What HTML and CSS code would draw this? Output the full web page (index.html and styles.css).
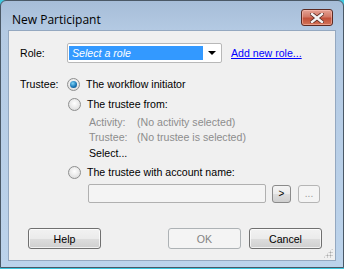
FILE: index.html
```html
<!DOCTYPE html>
<html lang="en">
<head>
<meta charset="UTF-8" />
<title>New Participant</title>
<link rel="stylesheet" href="styles.css">
</head>
<body>
  <div class="window">
    <!-- Title bar -->
    <div class="titlebar">
      <span class="title">New Participant</span>
      <button class="close" aria-label="Close">
        <svg width="14" height="10" viewBox="0 0 14 10">
          <path d="M2 1 L12 9 M12 1 L2 9" stroke="#5a2a22" stroke-width="4" stroke-linecap="square"/>
          <path d="M2 1 L12 9 M12 1 L2 9" stroke="#f4f4f4" stroke-width="2.4" stroke-linecap="square"/>
        </svg>
      </button>
    </div>

    <!-- Client area -->
    <div class="client">
      <div class="row role-row">
        <span class="label">Role:</span>
        <div class="combo">
          <span class="combo-value">Select a role</span>
          <span class="combo-arrow"></span>
        </div>
        <a href="#" class="link">Add new role...</a>
      </div>

      <div class="row trustee-row">
        <span class="label">Trustee:</span>
        <label class="radio checked"><span class="dot"></span>The workflow initiator</label>
      </div>

      <div class="row sub">
        <label class="radio"><span class="dot"></span>The trustee from:</label>
      </div>

      <div class="details">
        <div class="detail"><span class="dkey">Activity:</span>(No activity selected)</div>
        <div class="detail"><span class="dkey">Trustee:</span>(No trustee is selected)</div>
        <div class="detail select">Select...</div>
      </div>

      <div class="row sub account">
        <label class="radio"><span class="dot"></span>The trustee with account name:</label>
      </div>

      <div class="account-input">
        <div class="textbox"></div>
        <button class="small">&gt;</button>
        <button class="small disabled">...</button>
      </div>

      <div class="buttons">
        <button class="btn">Help</button>
        <div class="spacer"></div>
        <button class="btn disabled">OK</button>
        <button class="btn">Cancel</button>
      </div>

      <div class="grip"></div>
    </div>
  </div>
</body>
</html>
```

FILE: styles.css
```css
* {
  margin: 0;
  padding: 0;
  box-sizing: border-box;
}

html, body {
  width: 344px;
  height: 269px;
  overflow: hidden;
  background: #3fc8e0;
  font-family: 'Liberation Sans', Arial, sans-serif;
  font-size: 10.6px;
  color: #000;
}

.window {
  width: 344px;
  height: 268px;
  border: 1px solid #4a5866;
  border-radius: 6px 6px 0 0;
  background: linear-gradient(to bottom, #a6bdd8 0px, #b4cae3 30px, #bcd3eb 100%);
  display: flex;
  flex-direction: column;
}

.titlebar {
  height: 29px;
  display: flex;
  align-items: flex-start;
  padding: 8px 10px 0 11px;
}

.title {
  font-family: 'Open Sans', 'Liberation Sans', sans-serif;
  font-size: 12px;
  line-height: 14px;
  margin-top: 4px;
  color: #000;
  flex: 1;
}

.close {
  width: 32px;
  height: 17px;
  border: 1px solid #5c2a22;
  border-radius: 3px;
  background: linear-gradient(to bottom, #e4a294 0%, #d27866 45%, #c2503a 55%, #d27458 100%);
  display: flex;
  align-items: center;
  justify-content: center;
  box-shadow: inset 0 0 0 1px rgba(255, 200, 190, 0.5);
}

.client {
  position: relative;
  flex: 1;
  margin: 0 7px 6px 7px;
  background: #f0f0f0;
  border: 1px solid #94a8c0;
  padding: 11px 0 0 11px;
}

.row {
  display: flex;
  align-items: center;
}

.label {
  width: 47px;
}

.role-row {
  height: 21px;
}

.combo {
  width: 155px;
  height: 20px;
  border: 1px solid #b8b8b8;
  border-radius: 2px;
  background: #fff;
  display: flex;
  align-items: center;
  padding: 1px;
}

.combo-value {
  flex: 1;
  height: 14px;
  line-height: 14px;
  background: #3399ff;
  color: #fff;
  font-style: italic;
  padding-left: 3px;
}

.combo-arrow {
  width: 17px;
  display: flex;
  justify-content: center;
}

.combo-arrow::after {
  content: '';
  border-left: 4px solid transparent;
  border-right: 4px solid transparent;
  border-top: 4px solid #000;
}

.link {
  margin-left: 9px;
  color: #0000ff;
  text-decoration: underline;
}

.trustee-row {
  margin-top: 11px;
  height: 20px;
}

.radio {
  display: flex;
  align-items: center;
  gap: 6px;
}

.dot {
  width: 13px;
  height: 13px;
  border-radius: 50%;
  border: 1px solid #8e8f8f;
  background: radial-gradient(circle at 50% 40%, #ffffff 0%, #e6e6e6 60%, #d4d4d4 100%);
  display: flex;
  align-items: center;
  justify-content: center;
}

.checked .dot::after {
  content: '';
  width: 7px;
  height: 7px;
  border-radius: 50%;
  background: radial-gradient(circle at 40% 35%, #7fd4f5 0%, #1a78b8 55%, #0c3f6c 100%);
}

.sub {
  padding-left: 48px;
  height: 20px;
}

.details {
  padding-left: 69px;
  margin-top: 1px;
}

.detail {
  height: 15px;
  line-height: 15px;
  color: #8d8d8d;
  display: flex;
}

.dkey {
  width: 48px;
}

.detail.select {
  color: #000;
  margin-top: 1px;
}

.account {
  margin-top: 1px;
}

.account-input {
  display: flex;
  align-items: center;
  gap: 7px;
  padding-left: 68px;
  margin-top: 2px;
}

.textbox {
  width: 178px;
  height: 19px;
  border: 1px solid #b0b0b0;
  border-radius: 2px;
  background: #f4f4f4;
  margin-right: -1px;
}

.small {
  width: 19px;
  height: 18px;
  font-family: inherit;
  font-size: 10px;
  border: 1px solid #8a8a8a;
  border-radius: 3px;
  background: linear-gradient(to bottom, #f4f4f4 0%, #ebebeb 50%, #dddddd 51%, #cfcfcf 100%);
  color: #000;
}

.small.disabled {
  width: 22px;
  border-color: #b5b5b5;
  background: #f4f4f4;
  color: #9a9a9a;
}

.buttons {
  display: flex;
  align-items: center;
  margin-top: 25px;
  padding-left: 8px;
  padding-right: 13px;
  gap: 8px;
}

.spacer {
  flex: 1;
}

.btn {
  width: 73px;
  height: 21px;
  font-family: inherit;
  font-size: 10.6px;
  border: 1px solid #707070;
  border-radius: 3px;
  background: linear-gradient(to bottom, #f2f2f2 0%, #ebebeb 50%, #dddddd 51%, #cfcfcf 100%);
  box-shadow: inset 0 0 0 1px rgba(255, 255, 255, 0.7);
  color: #000;
}

.btn.disabled {
  border-color: #adb2b5;
  background: #f4f4f4;
  color: #838383;
  box-shadow: none;
}

.grip {
  position: absolute;
  right: 2px;
  bottom: 2px;
  width: 10px;
  height: 10px;
  background:
    radial-gradient(circle, #a9a9a9 0.8px, transparent 1.2px) 0 0 / 3px 3px;
  clip-path: polygon(100% 0, 100% 100%, 0 100%);
}
```
